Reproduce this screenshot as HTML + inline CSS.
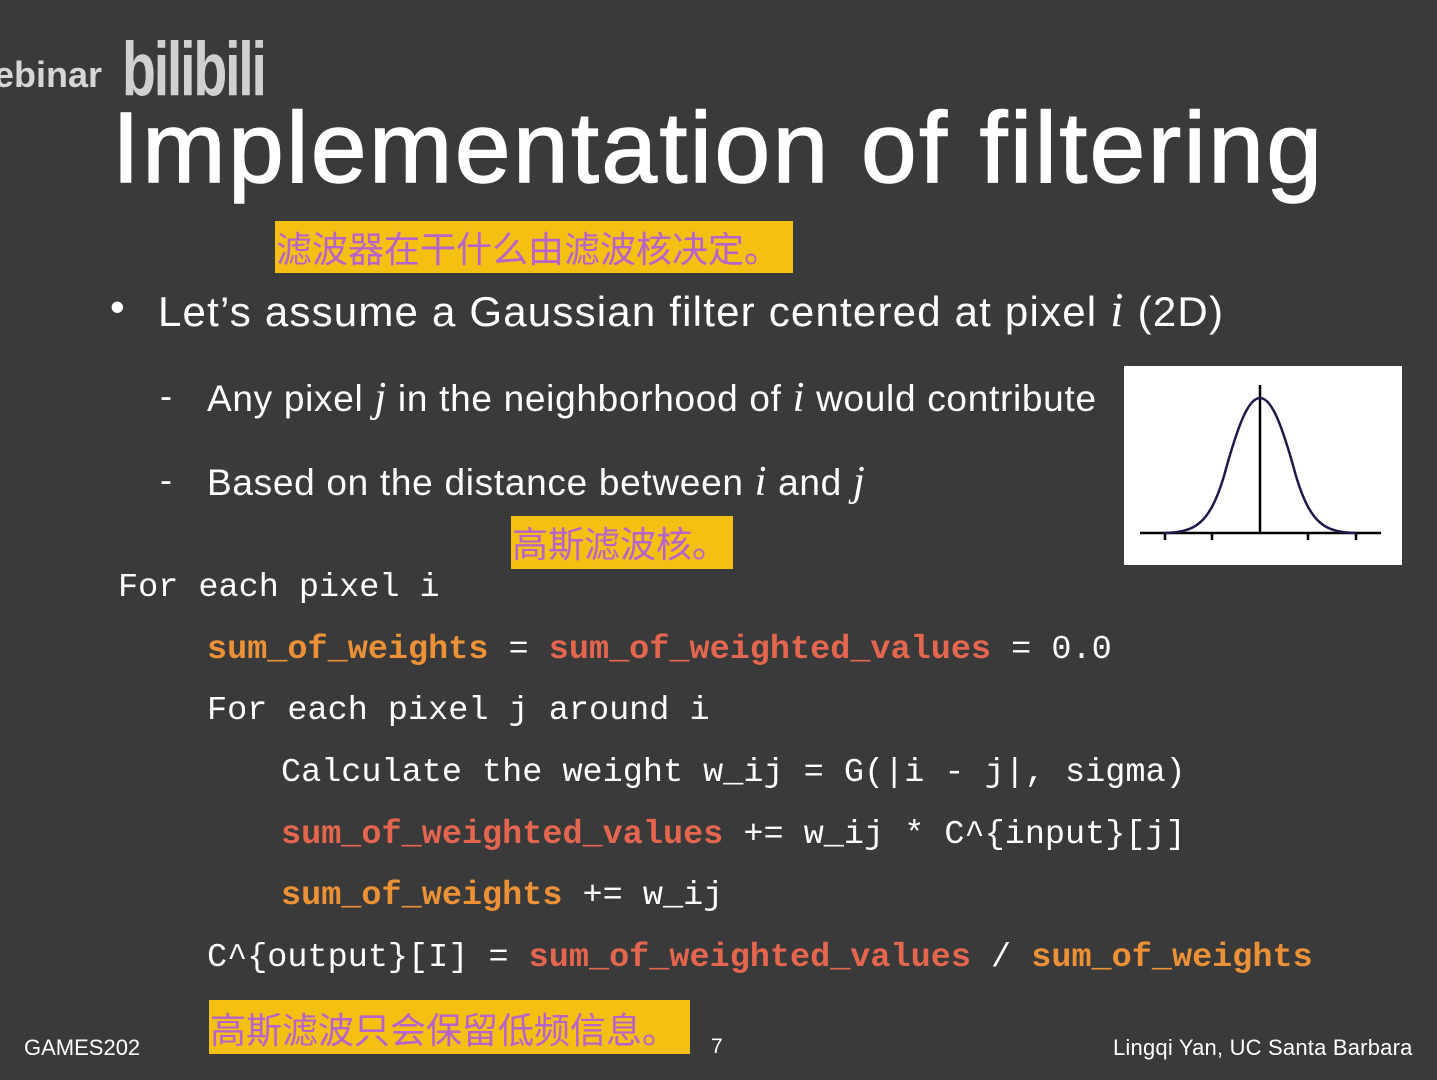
<!DOCTYPE html>
<html><head><meta charset="utf-8"><style>
html,body{margin:0;padding:0}
body{width:1437px;height:1080px;background:#3a3a3a;position:relative;overflow:hidden;font-family:"Liberation Sans","Noto Sans CJK SC",sans-serif;color:#fff}
.a{position:absolute;white-space:nowrap}
.hl{position:absolute;background:#f4c012;color:#b664cc;font-family:"Noto Sans CJK SC",sans-serif;font-size:36px;line-height:52px;padding-left:1px;overflow:hidden}
.code{position:absolute;font-family:"Liberation Mono",monospace;font-size:33.5px;color:#fff;white-space:pre;line-height:40px}
.o{color:#ec9136;font-weight:bold}
.r{color:#e5664e;font-weight:bold}
i.m{font-family:"Liberation Serif",serif;font-style:italic;font-size:1.15em}
</style></head><body>
<div class="a" style="left:-6px;top:54px;font-size:36px;color:#d6d6d6;font-weight:bold">ebinar</div>
<div class="a" style="left:122px;top:26px;font-size:76px;color:#d0d0d0;font-weight:bold;letter-spacing:-3px;transform:scaleX(0.73);transform-origin:left">bilibili</div>
<div class="a" style="left:112px;top:91px;font-size:100px;letter-spacing:2.5px;-webkit-text-stroke:1.5px #fff">Implementation of filtering</div>
<div class="hl" style="left:275px;top:221px;width:517px;height:52px">滤波器在干什么由滤波核决定。</div>
<div class="a" style="left:110px;top:283px;font-size:42px">•</div>
<div class="a" style="left:158px;top:283px;font-size:42px;letter-spacing:1.2px">Let’s assume a Gaussian filter centered at pixel <i class="m">i</i> (2D)</div>
<div class="a" style="left:160px;top:375px;font-size:36px">-</div>
<div class="a" style="left:207px;top:373px;font-size:37px;letter-spacing:0.7px">Any pixel <i class="m">j</i> in the neighborhood of <i class="m">i</i> would contribute</div>
<div class="a" style="left:160px;top:459px;font-size:36px">-</div>
<div class="a" style="left:207px;top:457px;font-size:37px;letter-spacing:0.7px">Based on the distance between <i class="m">i</i> and <i class="m">j</i></div>
<div class="hl" style="left:511px;top:516px;width:221px;height:53px">高斯滤波核。</div>
<svg class="a" style="left:1124px;top:366px" width="278" height="199">
<rect width="278" height="199" fill="#fff"/>
<line x1="16" y1="167" x2="257" y2="167" stroke="#000" stroke-width="2.5"/>
<line x1="136" y1="19" x2="136" y2="167" stroke="#000" stroke-width="2.5"/>
<g stroke="#000" stroke-width="2.5"><line x1="41" y1="167" x2="41" y2="174"/><line x1="88" y1="167" x2="88" y2="174"/><line x1="184" y1="167" x2="184" y2="174"/><line x1="232" y1="167" x2="232" y2="174"/></g>
<path d="M40 167 C70 166 85 160 100 110 C115 55 125 32 136 32 C147 32 157 55 172 110 C187 160 202 166 232 167" fill="none" stroke="#1e1a4a" stroke-width="2.5"/>
</svg>
<div class="code" style="left:118px;top:568px">For each pixel i</div>
<div class="code" style="left:207px;top:630px"><span class="o">sum_of_weights</span> = <span class="r">sum_of_weighted_values</span> = 0.0</div>
<div class="code" style="left:207px;top:691px">For each pixel j around i</div>
<div class="code" style="left:281px;top:753px">Calculate the weight w_ij = G(|i - j|, sigma)</div>
<div class="code" style="left:281px;top:815px"><span class="r">sum_of_weighted_values</span> += w_ij * C^{input}[j]</div>
<div class="code" style="left:281px;top:876px"><span class="o">sum_of_weights</span> += w_ij</div>
<div class="code" style="left:207px;top:938px">C^{output}[I] = <span class="r">sum_of_weighted_values</span> / <span class="o">sum_of_weights</span></div>
<div class="hl" style="left:209px;top:1000px;width:480px;height:54px;line-height:56px">高斯滤波只会保留低频信息。</div>
<div class="a" style="left:24px;top:1035px;font-size:22px">GAMES202</div>
<div class="a" style="left:711px;top:1035px;font-size:21px">7</div>
<div class="a" style="left:1113px;top:1035px;font-size:22px;letter-spacing:0.2px">Lingqi Yan, UC Santa Barbara</div>
</body></html>
